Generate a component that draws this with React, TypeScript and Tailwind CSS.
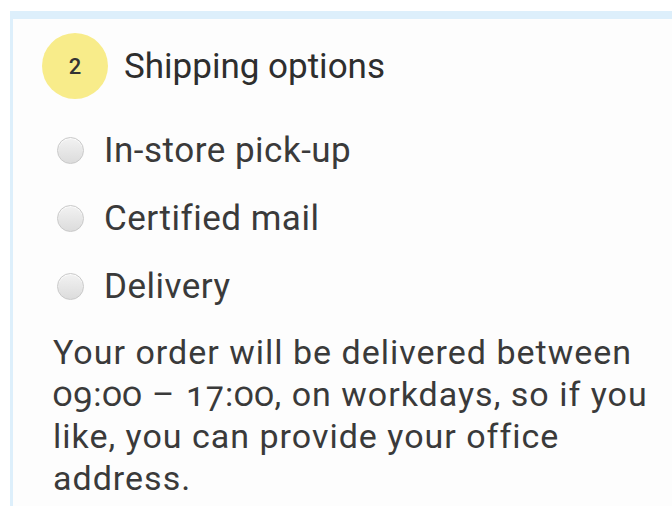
import React from "react";

const options = ["In-store pick-up", "Certified mail", "Delivery"];

function Radio() {
  return (
    <span className="block w-[27px] h-[27px] shrink-0 rounded-full border border-[#c9c9c9] bg-gradient-to-b from-[#f2f2f2] to-[#dcdcdc] shadow-[inset_0_1px_1px_rgba(255,255,255,0.8)]" />
  );
}

export default function App() {
  return (
    <div
      className="w-[672px] h-[506px] bg-white pl-[10px] pt-[11px] overflow-hidden text-[#3a3a3a]"
      style={{ fontFamily: 'Roboto, "Noto Sans", sans-serif' }}
    >
      <div className="h-full border-l-[3px] border-t-[8px] border-[#ddeffb] bg-[#fdfdfd]">
        <div className="flex items-center ml-[29px] mt-[14px]">
          <div className="w-[66px] h-[66px] rounded-full bg-[#f8ec8a] flex items-center justify-center text-[22px] font-medium text-[#333]">
            2
          </div>
          <div className="ml-[16px] text-[35px] leading-none text-[#2e2e2e]">Shipping options</div>
        </div>
        <div className="ml-[44px] mt-[36px] flex flex-col gap-[38px]">
          {options.map((o) => (
            <label key={o} className="flex items-center h-[30px]">
              <Radio />
              <span className="ml-[20px] text-[35px] leading-none tracking-[0.5px] whitespace-nowrap">{o}</span>
            </label>
          ))}
        </div>
        <p className="ml-[40px] mt-[30px] text-[34px] leading-[42px] tracking-[1px] whitespace-nowrap [font-variant-numeric:oldstyle-nums]">
          Your order will be delivered between
          <br />
          09:00 – 17:00, on workdays, so if you
          <br />
          like, you can provide your office
          <br />
          address.
        </p>
      </div>
    </div>
  );
}
